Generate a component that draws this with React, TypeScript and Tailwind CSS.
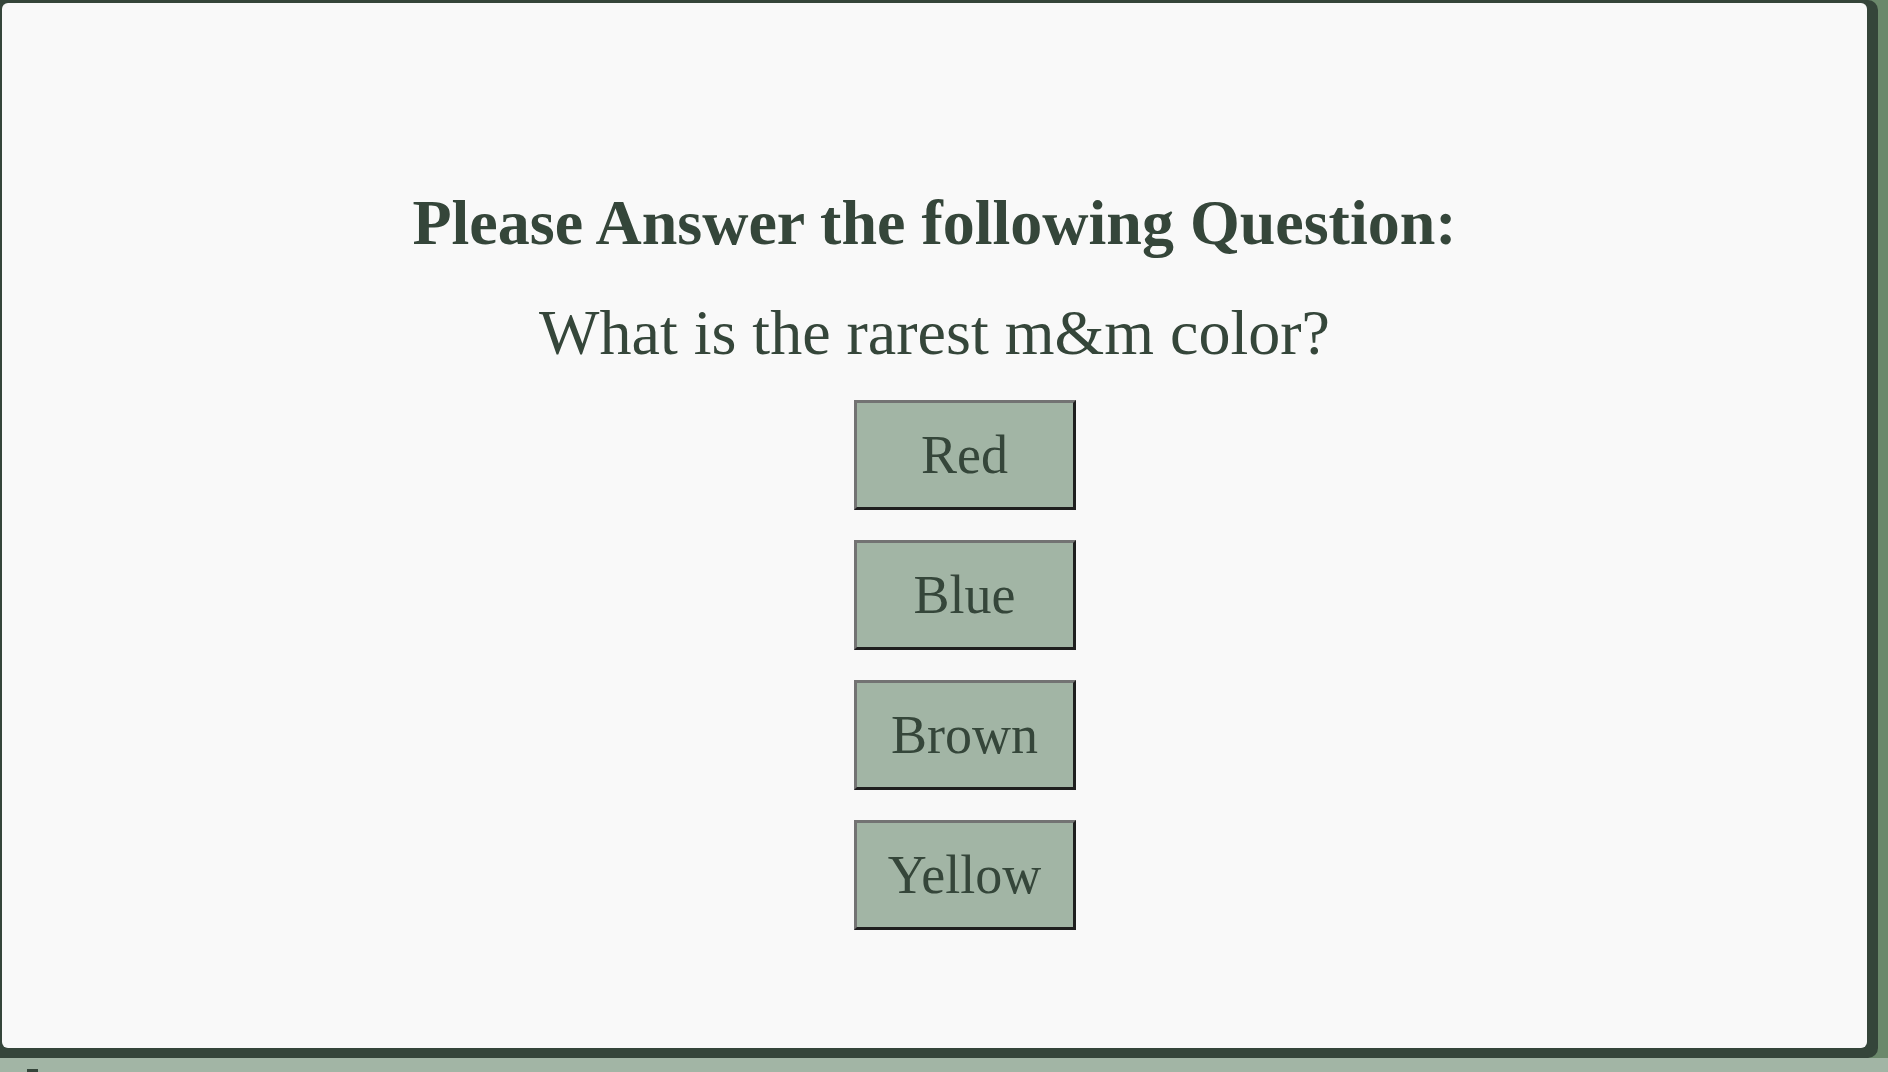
import React from "react";

const answers = ["Red", "Blue", "Brown", "Yellow"];

const App = () => {
  return (
    <div className="w-[1888px] h-[1072px] overflow-hidden bg-[#a2b5a5] font-['Liberation_Serif',serif] text-[#35463a]">
      <div className="h-[1058px] bg-[#6b886b]">
        <div className="w-[1878px] h-full bg-[#35453a] pt-[3px] pl-[2px] pr-[11px] pb-[10px] rounded-tr-[10px] rounded-br-[10px]">
          <div className="h-full bg-[#f9f9f9] rounded-[6px] flex flex-col items-center">
            <h1 className="mt-[183px] text-[64px] leading-[74px] font-bold">
              Please Answer the following Question:
            </h1>
            <p className="mt-[36px] text-[64px] leading-[74px]">
              What is the rarest m&amp;m color?
            </p>
            <div className="mt-[30px] pl-[60px] flex flex-col gap-[30px]">
              {answers.map((a) => (
                <button
                  key={a}
                  className="w-[222px] h-[110px] flex items-center justify-center bg-[#a2b5a5] border-[3px] border-t-[#737373] border-l-[#737373] border-r-[#1f1f1f] border-b-[#1f1f1f] text-[54px] leading-none"
                >
                  {a}
                </button>
              ))}
            </div>
          </div>
        </div>
      </div>
      <div className="ml-[27px] mt-[11px] w-[11px] h-[3px] bg-[#35453a]"></div>
    </div>
  );
};

export default App;
